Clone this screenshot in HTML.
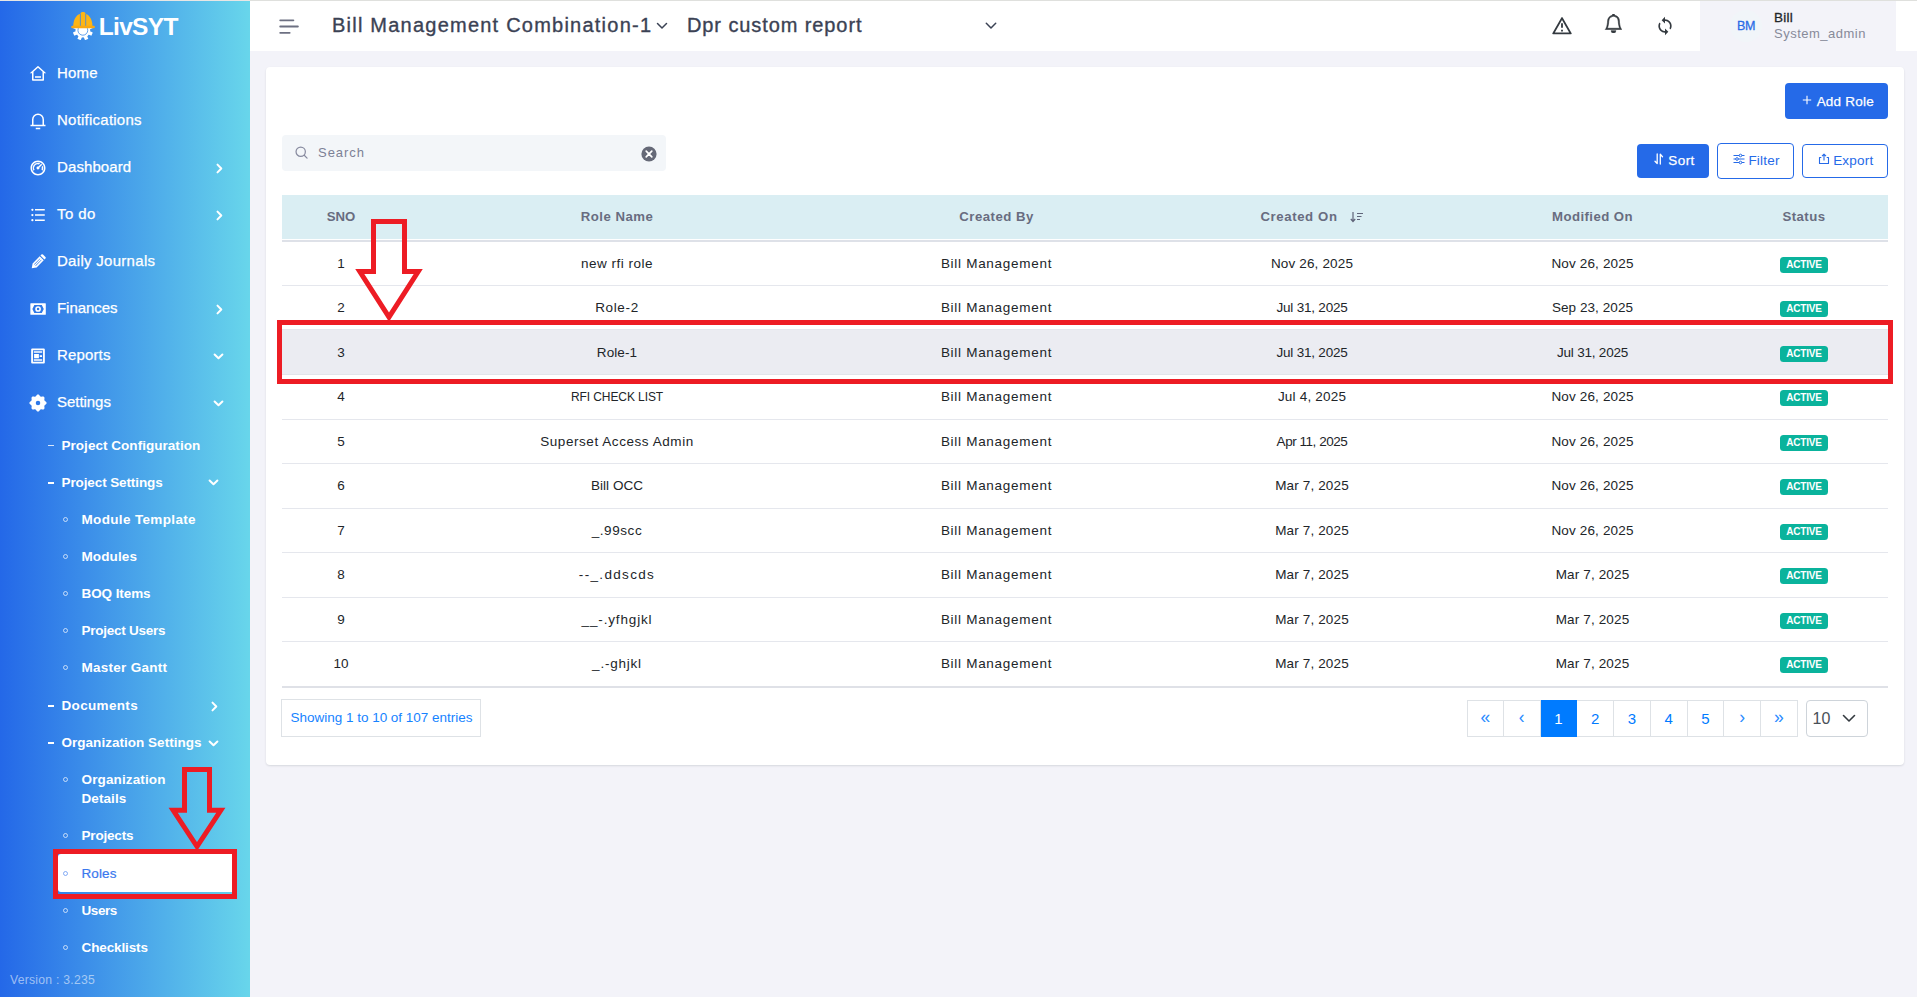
<!DOCTYPE html>
<html lang="en">
<head>
<meta charset="utf-8">
<title>LivSYT - Roles</title>
<style>
*,*:before,*:after{box-sizing:border-box}
*{margin:0;padding:0}
html,body{width:1917px;height:997px;overflow:hidden}
body{position:relative;background:#f3f3f9;font-family:"Liberation Sans",sans-serif;color:#212529;font-size:13.5px}
.f{white-space:nowrap}
a{text-decoration:none;color:inherit}
ul{list-style:none}
/* ---------- sidebar ---------- */
.sidebar{position:absolute;left:0;top:0;width:250px;height:997px;box-shadow:inset 0 1px 0 #e8e6e4;background:linear-gradient(90deg,#2468e8 0%,#68d6eb 100%);color:#fff}
.brand{position:absolute;left:71px;top:10px;height:32px}
.brand svg{display:block}
.brand b{position:absolute;left:27.8px;top:1.7px;font-size:24.5px;line-height:30px;font-weight:700;color:#fff}
.nav a{position:absolute;left:0;width:250px;display:block;color:#fff}
.nav a.m{height:47px;line-height:48px;font-size:15px;padding-left:57px}
.nav a.m .tx{-webkit-text-stroke:.25px #fff}
.nav a .ic{position:absolute;left:29px;top:16px;width:18px;height:18px;fill:#fff}
.nav a .ch{position:absolute;fill:none;stroke:#fff;stroke-width:2;stroke-linecap:round;stroke-linejoin:round}
.nav a.s1,.nav a.s2{font-size:13.5px;font-weight:700;line-height:19px;padding-top:9px;height:37px}
.nav a.s1{padding-left:61.5px}
.nav a.s2{padding-left:81.5px}
.nav a.s1:before{content:"";position:absolute;left:48px;top:18px;width:6px;height:1px;background:rgba(255,255,255,.8)}
.nav a.s1.on:before{height:2px;background:#fff}
.nav a.s2:before{content:"";position:absolute;left:63px;top:16.5px;width:5px;height:5px;border:1px solid rgba(255,255,255,.68);border-radius:50%}
.nav a.act{left:58px;width:178px;background:#fff;color:#3a78ee;font-weight:400;border-radius:3px 0 0 3px;padding-left:23.5px}
.nav a.act:before{left:5px;top:17px;border-color:rgba(58,120,238,.6)}
.nav a.act .tx{-webkit-text-stroke:.2px #3a78ee}
.ver{position:absolute;left:10px;top:972.3px;font-size:12.2px;line-height:16px;color:rgba(255,255,255,.55)}
/* ---------- topbar ---------- */
.topbar{position:absolute;left:250px;top:0;width:1667px;height:51px;background:#fff;border-top:1px solid #dfe0dd}
.topbar .hb{position:absolute;left:29px;top:17px}
.topbar .ttl{position:absolute;top:8px;height:32px;line-height:32px;font-size:20px;color:#3b4254;-webkit-text-stroke:.35px #3b4254}
.topbar svg.cv{position:absolute;fill:none;stroke:#3b4254;stroke-width:1.5;stroke-linecap:round;stroke-linejoin:round}
.topbar .ti{position:absolute;fill:#343a40}
.user{position:absolute;left:1450px;top:0;width:196px;height:50px;background:#f3f3f9}
.user .av{position:absolute;left:30px;top:9px;width:32px;height:32px;border-radius:50%;background:#f1f5f9;color:#2a6be6;font-size:12.5px;line-height:32px;text-align:center;-webkit-text-stroke:.3px #2a6be6}
.user .nm{position:absolute;left:74px;top:8px;font-size:13.5px;line-height:18px;color:#212529;-webkit-text-stroke:.3px #212529}
.user .rl{position:absolute;left:74px;top:23.7px;font-size:13px;line-height:18px;color:#878a99}
/* ---------- card ---------- */
.card{position:absolute;left:266px;top:67px;width:1638px;height:698px;background:#fff;border-radius:4px;box-shadow:0 1px 2px rgba(56,65,74,.15)}
.btn{position:absolute;display:block;border-radius:4px;font-size:13.5px;text-align:center;white-space:nowrap}
.btn.p{background:#256ae8;color:#fff;-webkit-text-stroke:.25px #fff}
.btn.o{background:#fff;border:1px solid #256ae8;color:#256ae8}
.btn svg{position:absolute}
.search{position:absolute;left:16px;top:68px;width:384px;height:36px;background:#f3f6f9;border-radius:4px}
.search .ph{position:absolute;left:36px;top:8.5px;font-size:13px;line-height:18px;color:#7c8196}
.search svg{position:absolute}
.tbl{position:absolute;left:16px;top:128px;width:1606px}
.tr{display:flex;width:1606px;border-bottom:1px solid #e5e7ed;font-size:13.5px;color:#212529}
.tr .c{text-align:center;white-space:nowrap;flex:none}
.tr.th{height:47px;line-height:43px;background:linear-gradient(to bottom,#daeef3 44px,#fff 44px);color:#686c80;font-size:13.2px;font-weight:700;border-bottom:2px solid #dee1e8}
.tr.hl{background:#ebecf2;border-bottom-color:#e2e4ea}
.tr.last{border-bottom:2px solid #dfe1e7}
.bd{display:inline-block;width:48px;height:16px;line-height:16.5px;border-radius:3.5px;background:#0ab39c;color:#fff;font-size:10px;font-weight:700;vertical-align:middle;position:relative;top:.5px}
.info{position:absolute;left:15px;top:632px;width:200px;height:38px;border:1px solid #dee2e6;color:#1683ff;font-size:13.5px;line-height:36px;padding-left:8.5px}
.pg{position:absolute;left:1201px;top:633px;height:37px;display:flex}
.pg a{display:block;width:36.75px;height:37px;border:1px solid #dee2e6;border-left-width:0;color:#007bff;font-size:15px;line-height:35px;text-align:center;background:#fff}
.pg a:first-child{border-left-width:1px}
.pg a.on{background:#007bff;border-color:#007bff;color:#fff;position:relative}
.pg a.ar{font-size:17.5px;line-height:32px;color:#2b8cff}
.sel{position:absolute;left:1540px;top:633px;width:62px;height:37px;border:1px solid #ced4da;border-radius:4px;font-size:16px;line-height:35px;padding-left:5.5px;color:#495057}
.sel svg{position:absolute;left:35px;top:13px;fill:none;stroke:#343a40;stroke-width:1.6;stroke-linecap:round;stroke-linejoin:round}
/* ---------- annotations ---------- */
.annot{position:absolute;left:0;top:0;width:1917px;height:997px;pointer-events:none}

</style>
</head>
<body>
<aside class="sidebar"><div class="brand"><svg width="26" height="32" viewBox="0 0 26 32">
<g fill="#fff"><circle cx="11.850" cy="20.300" r="7.300"/><rect x="10.050" y="26.300" width="3.600" height="4" rx=".5" transform="rotate(-67.5 11.850 20.300)"/><rect x="10.050" y="26.300" width="3.600" height="4" rx=".5" transform="rotate(-22.5 11.850 20.300)"/><rect x="10.050" y="26.300" width="3.600" height="4" rx=".5" transform="rotate(22.5 11.850 20.300)"/><rect x="10.050" y="26.300" width="3.600" height="4" rx=".5" transform="rotate(67.5 11.850 20.300)"/><rect x="10.050" y="26.300" width="3.600" height="4" rx=".5" transform="rotate(-112.5 11.850 20.300)"/><rect x="10.050" y="26.300" width="3.600" height="4" rx=".5" transform="rotate(112.5 11.850 20.300)"/></g>
<circle cx="11.850" cy="20.300" r="4.900" fill="none" stroke="#3b8ae8" stroke-width=".8"/>
<path d="M2.200 16.600C2.200 8.600 6.300 3.300 11.850 3.300S21.500 8.600 21.500 16.600z" fill="#fdb515"/>
<rect x="9.700" y="2" width="4.700" height="14" rx="1.500" fill="#fdb515"/>
<path d="M9.400 3.800V16M14.700 3.800V16" stroke="#3a88e9" stroke-width=".8" fill="none"/>
<rect x=".2" y="15.800" width="23.700" height="2.500" rx="1.250" fill="#f9a912"/>
</svg><b><span class="f" id="logo" style="letter-spacing:-0.691px">LivSYT</span></b></div><nav class="nav"><a class="m" style="top:49px"><svg class="ic" viewBox="0 0 24 24"><path d="M19 21H5a1 1 0 0 1-1-1v-9H1l10.327-9.388a1 1 0 0 1 1.346 0L23 11h-3v9a1 1 0 0 1-1 1zM6 19h12V9.157l-6-5.454-6 5.454V19zm2-4h8v2H8v-2z"/></svg><span class="tx"><span class="f" id="t1" style="letter-spacing:0.196px">Home</span></span></a><a class="m" style="top:96px"><svg class="ic" viewBox="0 0 24 24"><path d="M20 17h2v2H2v-2h2v-7a8 8 0 1 1 16 0v7zm-2 0v-7a6 6 0 1 0-12 0v7h12zm-9 4h6v2H9v-2z"/></svg><span class="tx"><span class="f" id="t2" style="letter-spacing:0.233px">Notifications</span></span></a><a class="m" style="top:143px"><svg class="ic" viewBox="0 0 24 24"><path d="M12 2c5.523 0 10 4.477 10 10s-4.477 10-10 10S2 17.523 2 12 6.477 2 12 2zm0 2a8 8 0 1 0 0 16 8 8 0 0 0 0-16zm0 1c1.018 0 1.985.217 2.858.608L13.295 7.17a5 5 0 0 0-5.893 7.152L5.97 15.755A7 7 0 0 1 12 5zm6.392 4.143c.39.872.608 1.84.608 2.857 0 1.28-.344 2.48-.944 3.513l-1.433-1.433a5.002 5.002 0 0 0 .206-3.373l1.563-1.564zm-2.15-2.8l1.415 1.414-3.724 3.726a2 2 0 1 1-1.414-1.414l3.724-3.726z"/></svg><span class="tx"><span class="f" id="t3" style="letter-spacing:0.102px">Dashboard</span></span><svg class="ch" style="left:215.5px;top:20.0px" width="7" height="11" viewBox="0 0 7 11"><path d="M1.500 1.600 5.300 5.500 1.500 9.400"/></svg></a><a class="m" style="top:190px"><svg class="ic" viewBox="0 0 24 24"><path d="M8 4h13v2H8V4zM4.500 6.500a1.500 1.500 0 1 1 0-3 1.500 1.500 0 0 1 0 3zm0 7a1.500 1.500 0 1 1 0-3 1.500 1.500 0 0 1 0 3zm0 6.900a1.500 1.500 0 1 1 0-3 1.500 1.500 0 0 1 0 3zM8 11h13v2H8v-2zm0 7h13v2H8v-2z"/></svg><span class="tx"><span class="f" id="t4" style="letter-spacing:0.398px">To do</span></span><svg class="ch" style="left:215.5px;top:20.0px" width="7" height="11" viewBox="0 0 7 11"><path d="M1.500 1.600 5.300 5.500 1.500 9.400"/></svg></a><a class="m" style="top:237px"><svg class="ic" viewBox="0 0 24 24"><g transform="rotate(45 12 12)"><path fill-rule="evenodd" d="M8.200 1.800A1.500 1.500 0 0 1 9.700.3h4.600A1.500 1.500 0 0 1 15.800 1.800V3.600H8.200zM8.200 5h7.600V18.400l-3.800 5.400-3.800-5.400zM10.400 6.800v11h.8v-11zM12.800 6.800v11h.8v-11z"/></g></svg><span class="tx"><span class="f" id="t5" style="letter-spacing:0.292px">Daily Journals</span></span></a><a class="m" style="top:284px"><svg class="ic" viewBox="0 0 24 24"><path fill-rule="evenodd" d="M2.500 4.200h19.200a.7.700 0 0 1 .7.700v14a.7.700 0 0 1-.7.700H2.500a.7.700 0 0 1-.7-.7v-14a.7.700 0 0 1 .7-.7zM4.500 12l2.600-5.200h10l2.600 5.200-2.600 5.200h-10z"/><path fill-rule="evenodd" d="M12.100 8.200a3.800 3.800 0 1 0 0 7.600 3.800 3.800 0 0 0 0-7.600zm0 2.100a1.700 1.700 0 1 1 0 3.400 1.700 1.700 0 0 1 0-3.400z"/></svg><span class="tx"><span class="f" id="t6" style="letter-spacing:-0.039px">Finances</span></span><svg class="ch" style="left:215.5px;top:20.0px" width="7" height="11" viewBox="0 0 7 11"><path d="M1.500 1.600 5.300 5.500 1.500 9.400"/></svg></a><a class="m" style="top:331px"><svg class="ic" viewBox="0 0 24 24"><path fill-rule="evenodd" d="M4.300 2h15.400A1.400 1.400 0 0 1 21.100 3.400v17.200a1.400 1.400 0 0 1-1.400 1.400H4.300a1.400 1.400 0 0 1-1.400-1.400V3.400A1.400 1.400 0 0 1 4.300 2zM5.300 4.400v15.200h13.400V4.400z"/><path d="M6.400 5.800h11.200v1.900H6.400zM6.800 9.300h6.400v5.700H6.800zM14.300 11.100h3.100v2.300h-3.100zM6.400 16.400h11.200v1.900H6.400z"/></svg><span class="tx"><span class="f" id="t7" style="letter-spacing:0.145px">Reports</span></span><svg class="ch" style="left:213.0px;top:21.5px" width="11" height="7" viewBox="0 0 11 7"><path d="M1.600 1.500 5.500 5.300 9.400 1.500"/></svg></a><a class="m" style="top:378px"><svg class="ic" viewBox="0 0 24 24"><path fill-rule="evenodd" d="M12.00 0.55 12.45 0.61 12.88 0.79 13.29 1.08 13.67 1.44 14.02 1.85 14.34 2.27 14.63 2.66 14.92 3.00 15.22 3.27 15.54 3.45 15.90 3.55 16.29 3.57 16.74 3.53 17.23 3.47 17.75 3.39 18.28 3.35 18.81 3.36 19.30 3.45 19.74 3.63 20.10 3.90 20.37 4.26 20.55 4.70 20.64 5.19 20.65 5.72 20.61 6.25 20.53 6.77 20.47 7.26 20.43 7.71 20.45 8.10 20.55 8.46 20.73 8.78 21.00 9.08 21.34 9.37 21.73 9.66 22.15 9.98 22.56 10.33 22.92 10.71 23.21 11.12 23.39 11.55 23.45 12.00 23.39 12.45 23.21 12.88 22.92 13.29 22.56 13.67 22.15 14.02 21.73 14.34 21.34 14.63 21.00 14.92 20.73 15.22 20.55 15.54 20.45 15.90 20.43 16.29 20.47 16.74 20.53 17.23 20.61 17.75 20.65 18.28 20.64 18.81 20.55 19.30 20.37 19.74 20.10 20.10 19.74 20.37 19.30 20.55 18.81 20.64 18.28 20.65 17.75 20.61 17.23 20.53 16.74 20.47 16.29 20.43 15.90 20.45 15.54 20.55 15.22 20.73 14.92 21.00 14.63 21.34 14.34 21.73 14.02 22.15 13.67 22.56 13.29 22.92 12.88 23.21 12.45 23.39 12.00 23.45 11.55 23.39 11.12 23.21 10.71 22.92 10.33 22.56 9.98 22.15 9.66 21.73 9.37 21.34 9.08 21.00 8.78 20.73 8.46 20.55 8.10 20.45 7.71 20.43 7.26 20.47 6.77 20.53 6.25 20.61 5.72 20.65 5.19 20.64 4.70 20.55 4.26 20.37 3.90 20.10 3.63 19.74 3.45 19.30 3.36 18.81 3.35 18.28 3.39 17.75 3.47 17.23 3.53 16.74 3.57 16.29 3.55 15.90 3.45 15.54 3.27 15.22 3.00 14.92 2.66 14.63 2.27 14.34 1.85 14.02 1.44 13.67 1.08 13.29 0.79 12.88 0.61 12.45 0.55 12.00 0.61 11.55 0.79 11.12 1.08 10.71 1.44 10.33 1.85 9.98 2.27 9.66 2.66 9.37 3.00 9.08 3.27 8.78 3.45 8.46 3.55 8.10 3.57 7.71 3.53 7.26 3.47 6.77 3.39 6.25 3.35 5.72 3.36 5.19 3.45 4.70 3.63 4.26 3.90 3.90 4.26 3.63 4.70 3.45 5.19 3.36 5.72 3.35 6.25 3.39 6.77 3.47 7.26 3.53 7.71 3.57 8.10 3.55 8.46 3.45 8.78 3.27 9.08 3.00 9.37 2.66 9.66 2.27 9.98 1.85 10.33 1.44 10.71 1.08 11.12 0.79 11.55 0.61Z M12 9a3 3 0 1 0 0 6 3 3 0 0 0 0-6z"/></svg><span class="tx"><span class="f" id="t8" style="letter-spacing:-0.043px">Settings</span></span><svg class="ch" style="left:213.0px;top:21.5px" width="11" height="7" viewBox="0 0 11 7"><path d="M1.600 1.500 5.500 5.300 9.400 1.500"/></svg></a><a class="s1" style="top:426.5px"><span class="tx"><span class="f" id="t9" style="letter-spacing:0.035px">Project Configuration</span></span></a><a class="s1 on" style="top:463.5px"><span class="tx"><span class="f" id="t10" style="letter-spacing:-0.105px">Project Settings</span></span><svg class="ch" style="left:208.0px;top:15.899999999999999px" width="11" height="7" viewBox="0 0 11 7"><path d="M1.600 1.500 5.500 5.300 9.400 1.500"/></svg></a><a class="s2" style="top:500.5px"><span class="tx"><span class="f" id="t11" style="letter-spacing:0.346px">Module Template</span></span></a><a class="s2" style="top:537.5px"><span class="tx"><span class="f" id="t12" style="letter-spacing:0.124px">Modules</span></span></a><a class="s2" style="top:574.5px"><span class="tx"><span class="f" id="t13" style="letter-spacing:-0.085px">BOQ Items</span></span></a><a class="s2" style="top:611.5px"><span class="tx"><span class="f" id="t14" style="letter-spacing:-0.246px">Project Users</span></span></a><a class="s2" style="top:648.5px"><span class="tx"><span class="f" id="t15" style="letter-spacing:0.270px">Master Gantt</span></span></a><a class="s1 on" style="top:687.0px"><span class="tx"><span class="f" id="t16" style="letter-spacing:0.335px">Documents</span></span><svg class="ch" style="left:210.5px;top:14.0px" width="7" height="11" viewBox="0 0 7 11"><path d="M1.500 1.600 5.300 5.500 1.500 9.400"/></svg></a><a class="s1 on" style="top:723.8px"><span class="tx"><span class="f" id="t17" style="letter-spacing:0.024px">Organization Settings</span></span><svg class="ch" style="left:208.0px;top:15.899999999999999px" width="11" height="7" viewBox="0 0 11 7"><path d="M1.600 1.500 5.500 5.300 9.400 1.500"/></svg></a><a class="s2" style="top:760.5px;height:56px"><span class="tx"><span class="f" id="t18" style="letter-spacing:0.136px">Organization</span></span><br><span class="tx"><span class="f" id="t19" style="letter-spacing:0.088px">Details</span></span></a><a class="s2" style="top:816.5px"><span class="tx"><span class="f" id="t20" style="letter-spacing:-0.182px">Projects</span></span></a><a class="s2 act" style="top:854px;height:38px;padding-top:9.5px"><span class="tx"><span class="f" id="t21" style="letter-spacing:0.117px">Roles</span></span></a><a class="s2" style="top:891.5px"><span class="tx"><span class="f" id="t22" style="letter-spacing:-0.432px">Users</span></span></a><a class="s2" style="top:928.5px"><span class="tx"><span class="f" id="t23" style="letter-spacing:-0.115px">Checklists</span></span></a></nav><div class="ver"><span class="f" id="t24" style="letter-spacing:0.242px">Version : 3.235</span></div></aside>
<header class="topbar"><svg class="hb" width="22" height="16" viewBox="0 0 22 16"><g fill="#6d7082"><rect x=".3" y="1.400" width="15" height="1.800" rx=".9"/><rect x=".3" y="7.600" width="19.500" height="1.800" rx=".9"/><rect x=".3" y="13.900" width="11.300" height="1.800" rx=".9"/></g></svg><div class="ttl" style="left:82px"><span class="f" id="ttl1" style="letter-spacing:1.229px">Bill Management Combination-1</span></div><svg class="cv" style="left:405.500px;top:20.500px" width="12" height="8" viewBox="0 0 12 8"><path d="M1.500 1.500 6 6 10.500 1.500"/></svg><div class="ttl" style="left:437px"><span class="f" id="ttl2" style="letter-spacing:0.903px">Dpr custom report</span></div><svg class="cv" style="left:734.500px;top:20.500px" width="12" height="8" viewBox="0 0 12 8"><path d="M1.300 1.300 6 6 10.700 1.300"/></svg><svg class="ti" style="left:1301px;top:14px" width="22" height="22" viewBox="0 0 24 24"><path d="M12.866 3l9.526 16.500a1 1 0 0 1-.866 1.500H2.474a1 1 0 0 1-.866-1.500L11.134 3a1 1 0 0 1 1.732 0zM4.206 19h15.588L12 5.500 4.206 19zM11 16h2v2h-2v-2zm0-7h2v5h-2V9z"/></svg><svg class="ti" style="left:1353.800px;top:12.800px" width="19" height="19" viewBox="0 0 16 16" fill="#212529" stroke="#212529" stroke-width=".45"><path d="M8 16a2 2 0 0 0 2-2H6a2 2 0 0 0 2 2zM8 1.918l-.797.161A4.002 4.002 0 0 0 4 6c0 .628-.134 2.197-.459 3.742-.16.767-.376 1.566-.663 2.258h10.244c-.287-.692-.502-1.490-.663-2.258C12.134 8.197 12 6.628 12 6a4.002 4.002 0 0 0-3.203-3.920L8 1.917zM14.220 12c.223.447.481.801.780 1H1c.299-.199.557-.553.780-1C2.680 10.200 3 6.880 3 6c0-2.420 1.720-4.440 4.005-4.901a1 1 0 1 1 1.990 0A5.002 5.002 0 0 1 13 6c0 .880.320 4.200 1.220 6z"/></svg><svg class="ti" style="left:1405px;top:14.500px" width="20" height="20" viewBox="0 0 24 24"><path d="M12 4V1L8 5l4 4V6c3.310 0 6 2.690 6 6 0 1.010-.25 1.970-.7 2.800l1.460 1.460A7.930 7.930 0 0 0 20 12c0-4.420-3.580-8-8-8zm0 14c-3.310 0-6-2.690-6-6 0-1.010.25-1.970.7-2.800L5.240 7.740A7.930 7.930 0 0 0 4 12c0 4.420 3.580 8 8 8v3l4-4-4-4v3z"/></svg><div class="user"><div class="av"><span class="f" id="av" style="letter-spacing:-0.250px">BM</span></div><div class="nm"><span class="f" id="nm" style="letter-spacing:0.262px">Bill</span></div><div class="rl"><span class="f" id="rl" style="letter-spacing:0.501px">System_admin</span></div></div></header>
<main class="card"><a class="btn p" style="left:1519px;top:16px;width:103px;height:36px;line-height:37.600px;padding-left:17.500px"><svg style="left:16.500px;top:11.500px" width="10" height="10" viewBox="0 0 10 10"><path d="M5 .8v8.400M.8 5h8.400" stroke="#fff" stroke-width="1.100" fill="none"/></svg><span class="f" id="addrole" style="letter-spacing:0.209px">Add Role</span></a><div class="search"><svg style="left:13px;top:11px" width="13.300" height="13.300" viewBox="0 0 14 14"><circle cx="6" cy="6" r="4.900" fill="none" stroke="#878a9f" stroke-width="1.300"/><path d="M9.700 9.700l3 3" stroke="#878a9f" stroke-width="1.300" stroke-linecap="round"/></svg><span class="ph"><span class="f" id="search" style="letter-spacing:0.961px">Search</span></span><svg style="left:359px;top:11px" width="16" height="16" viewBox="0 0 16 16"><circle cx="8" cy="8" r="7.600" fill="#656977"/><path d="M5.200 5.200l5.600 5.600M10.800 5.200l-5.600 5.600" stroke="#fff" stroke-width="1.700" stroke-linecap="round"/></svg></div><a class="btn p" style="left:1371px;top:77px;width:72px;height:34px;line-height:34px;padding-left:17px"><svg style="left:17px;top:9px" width="10" height="12" viewBox="0 0 10 12"><path d="M3.200 1v9.500M1 8.200l2.200 2.300M6.300 11V1.500M6.300 1.300l2.200 2.400" stroke="#fff" stroke-width="1.300" fill="none" stroke-linecap="round"/></svg><span class="f" id="sort" style="letter-spacing:0.410px">Sort</span></a><a class="btn o" style="left:1451px;top:76px;width:77px;height:35.700px;line-height:34.500px;padding-left:17px"><svg style="left:15px;top:9.200px" width="12" height="12" viewBox="0 0 12 12"><g stroke="#256ae8" stroke-width="1" fill="#fff"><path d="M.5 2.500h11M.5 6h11M.5 9.500h11" fill="none"/><circle cx="7.500" cy="2.500" r="1.300"/><circle cx="4" cy="6" r="1.300"/><circle cx="7.500" cy="9.500" r="1.300"/></g></svg><span class="f" id="filter" style="letter-spacing:0.198px">Filter</span></a><a class="btn o" style="left:1536px;top:77px;width:86px;height:34px;line-height:32px;padding-left:16.500px"><svg style="left:14.700px;top:8.200px" width="12" height="12" viewBox="0 0 12 12"><path d="M3.300 4.500H1.500v6h9v-6H8.700M6 7.500v-6M4 3.200l2-2 2 2" stroke="#256ae8" stroke-width="1.100" fill="none" stroke-linejoin="round"/></svg><span class="f" id="export" style="letter-spacing:0.197px">Export</span></a><div class="tbl" role="table"><div class="tr th" role="row"><div class="c" style="width:118px"><span class="f" id="h1" style="letter-spacing:0.009px">SNO</span></div><div class="c" style="width:434px"><span class="f" id="h2" style="letter-spacing:0.478px">Role Name</span></div><div class="c" style="width:325px"><span class="f" id="h3" style="letter-spacing:0.486px">Created By</span></div><div class="c" style="width:306px"><span class="f" id="h4" style="letter-spacing:0.613px">Created On</span><svg style="margin-left:12px;vertical-align:-2px" width="14" height="12" viewBox="0 0 14 12"><path d="M3 1v9.500M.8 8l2.200 2.500L5.200 8M7 2.500h6M7 5.500h4.500M7 8.500h3" stroke="#60657a" stroke-width="1.200" fill="none"/></svg></div><div class="c" style="width:255px"><span class="f" id="h5" style="letter-spacing:0.420px">Modified On</span></div><div class="c" style="width:168px"><span class="f" id="h6" style="letter-spacing:0.477px">Status</span></div></div><div class="tr" role="row" style="height:44px;line-height:43px"><div class="c" style="width:118px">1</div><div class="c" style="width:434px"><span class="f" id="t25" style="letter-spacing:0.497px">new rfi role</span></div><div class="c" style="width:325px"><span class="f" id="t26" style="letter-spacing:0.710px">Bill Management</span></div><div class="c" style="width:306px"><span class="f" id="t27" style="letter-spacing:0.153px">Nov 26, 2025</span></div><div class="c" style="width:255px"><span class="f" id="t28" style="letter-spacing:0.153px">Nov 26, 2025</span></div><div class="c" style="width:168px"><span class="bd"><span class="f" id="t29" style="letter-spacing:-0.195px">ACTIVE</span></span></div></div><div class="tr" role="row" style="height:44px;line-height:43px"><div class="c" style="width:118px">2</div><div class="c" style="width:434px"><span class="f" id="t30" style="letter-spacing:0.646px">Role-2</span></div><div class="c" style="width:325px"><span class="f" id="t31" style="letter-spacing:0.710px">Bill Management</span></div><div class="c" style="width:306px"><span class="f" id="t32" style="letter-spacing:-0.206px">Jul 31, 2025</span></div><div class="c" style="width:255px"><span class="f" id="t33" style="letter-spacing:0.061px">Sep 23, 2025</span></div><div class="c" style="width:168px"><span class="bd"><span class="f" id="t34" style="letter-spacing:-0.195px">ACTIVE</span></span></div></div><div class="tr hl" role="row" style="height:45px;line-height:45.5px"><div class="c" style="width:118px">3</div><div class="c" style="width:434px"><span class="f" id="t35" style="letter-spacing:0.104px">Role-1</span></div><div class="c" style="width:325px"><span class="f" id="t36" style="letter-spacing:0.710px">Bill Management</span></div><div class="c" style="width:306px"><span class="f" id="t37" style="letter-spacing:-0.206px">Jul 31, 2025</span></div><div class="c" style="width:255px"><span class="f" id="t38" style="letter-spacing:-0.206px">Jul 31, 2025</span></div><div class="c" style="width:168px"><span class="bd"><span class="f" id="t39" style="letter-spacing:-0.195px">ACTIVE</span></span></div></div><div class="tr" role="row" style="height:45px;line-height:44px"><div class="c" style="width:118px">4</div><div class="c" style="width:434px"><span style="font-size:12px"><span class="f" id="t40" style="letter-spacing:-0.081px">RFI CHECK LIST</span></span></div><div class="c" style="width:325px"><span class="f" id="t41" style="letter-spacing:0.710px">Bill Management</span></div><div class="c" style="width:306px"><span class="f" id="t42" style="letter-spacing:0.195px">Jul 4, 2025</span></div><div class="c" style="width:255px"><span class="f" id="t43" style="letter-spacing:0.153px">Nov 26, 2025</span></div><div class="c" style="width:168px"><span class="bd"><span class="f" id="t44" style="letter-spacing:-0.195px">ACTIVE</span></span></div></div><div class="tr" role="row" style="height:44px;line-height:43px"><div class="c" style="width:118px">5</div><div class="c" style="width:434px"><span class="f" id="t45" style="letter-spacing:0.559px">Superset Access Admin</span></div><div class="c" style="width:325px"><span class="f" id="t46" style="letter-spacing:0.710px">Bill Management</span></div><div class="c" style="width:306px"><span class="f" id="t47" style="letter-spacing:-0.456px">Apr 11, 2025</span></div><div class="c" style="width:255px"><span class="f" id="t48" style="letter-spacing:0.153px">Nov 26, 2025</span></div><div class="c" style="width:168px"><span class="bd"><span class="f" id="t49" style="letter-spacing:-0.195px">ACTIVE</span></span></div></div><div class="tr" role="row" style="height:45px;line-height:44px"><div class="c" style="width:118px">6</div><div class="c" style="width:434px"><span class="f" id="t50" style="letter-spacing:0.033px">Bill OCC</span></div><div class="c" style="width:325px"><span class="f" id="t51" style="letter-spacing:0.710px">Bill Management</span></div><div class="c" style="width:306px"><span class="f" id="t52" style="letter-spacing:0.145px">Mar 7, 2025</span></div><div class="c" style="width:255px"><span class="f" id="t53" style="letter-spacing:0.153px">Nov 26, 2025</span></div><div class="c" style="width:168px"><span class="bd"><span class="f" id="t54" style="letter-spacing:-0.195px">ACTIVE</span></span></div></div><div class="tr" role="row" style="height:44px;line-height:43px"><div class="c" style="width:118px">7</div><div class="c" style="width:434px"><span class="f" id="t55" style="letter-spacing:0.578px">_.99scc</span></div><div class="c" style="width:325px"><span class="f" id="t56" style="letter-spacing:0.710px">Bill Management</span></div><div class="c" style="width:306px"><span class="f" id="t57" style="letter-spacing:0.145px">Mar 7, 2025</span></div><div class="c" style="width:255px"><span class="f" id="t58" style="letter-spacing:0.153px">Nov 26, 2025</span></div><div class="c" style="width:168px"><span class="bd"><span class="f" id="t59" style="letter-spacing:-0.195px">ACTIVE</span></span></div></div><div class="tr" role="row" style="height:45px;line-height:44px"><div class="c" style="width:118px">8</div><div class="c" style="width:434px"><span class="f" id="t60" style="letter-spacing:1.330px">--_.ddscds</span></div><div class="c" style="width:325px"><span class="f" id="t61" style="letter-spacing:0.710px">Bill Management</span></div><div class="c" style="width:306px"><span class="f" id="t62" style="letter-spacing:0.145px">Mar 7, 2025</span></div><div class="c" style="width:255px"><span class="f" id="t63" style="letter-spacing:0.145px">Mar 7, 2025</span></div><div class="c" style="width:168px"><span class="bd"><span class="f" id="t64" style="letter-spacing:-0.195px">ACTIVE</span></span></div></div><div class="tr" role="row" style="height:44px;line-height:43px"><div class="c" style="width:118px">9</div><div class="c" style="width:434px"><span class="f" id="t65" style="letter-spacing:0.846px">__-.yfhgjkl</span></div><div class="c" style="width:325px"><span class="f" id="t66" style="letter-spacing:0.710px">Bill Management</span></div><div class="c" style="width:306px"><span class="f" id="t67" style="letter-spacing:0.145px">Mar 7, 2025</span></div><div class="c" style="width:255px"><span class="f" id="t68" style="letter-spacing:0.145px">Mar 7, 2025</span></div><div class="c" style="width:168px"><span class="bd"><span class="f" id="t69" style="letter-spacing:-0.195px">ACTIVE</span></span></div></div><div class="tr last" role="row" style="height:46px;line-height:44px"><div class="c" style="width:118px">10</div><div class="c" style="width:434px"><span class="f" id="t70" style="letter-spacing:0.781px">_.-ghjkl</span></div><div class="c" style="width:325px"><span class="f" id="t71" style="letter-spacing:0.710px">Bill Management</span></div><div class="c" style="width:306px"><span class="f" id="t72" style="letter-spacing:0.145px">Mar 7, 2025</span></div><div class="c" style="width:255px"><span class="f" id="t73" style="letter-spacing:0.145px">Mar 7, 2025</span></div><div class="c" style="width:168px"><span class="bd"><span class="f" id="t74" style="letter-spacing:-0.195px">ACTIVE</span></span></div></div></div><div class="info"><span class="f" id="info" style="letter-spacing:-0.013px">Showing 1 to 10 of 107 entries</span></div><div class="pg"><a class="ar">&laquo;</a><a class="ar">&lsaquo;</a><a class="on">1</a><a>2</a><a>3</a><a>4</a><a>5</a><a class="ar">&rsaquo;</a><a class="ar">&raquo;</a></div><div class="sel">10<svg width="14" height="9" viewBox="0 0 14 9"><path d="M1.500 1.500 7 7 12.500 1.500"/></svg></div></main>
<svg class="annot" viewBox="0 0 1917 997"><g fill="none" stroke="#ed1c24" stroke-width="5" stroke-linejoin="miter"><rect x="279.500" y="322.500" width="1611" height="59"/><path d="M373.500 221.500H404.500V271.500H418.200L389 317 359.800 271.500H373.500Z"/><rect x="55.500" y="851.500" width="179" height="45"/><path d="M184.500 769.500H209.500V810.300H220.800L197 846.500 173.200 810.300H184.500Z"/></g></svg>

</body>
</html>
